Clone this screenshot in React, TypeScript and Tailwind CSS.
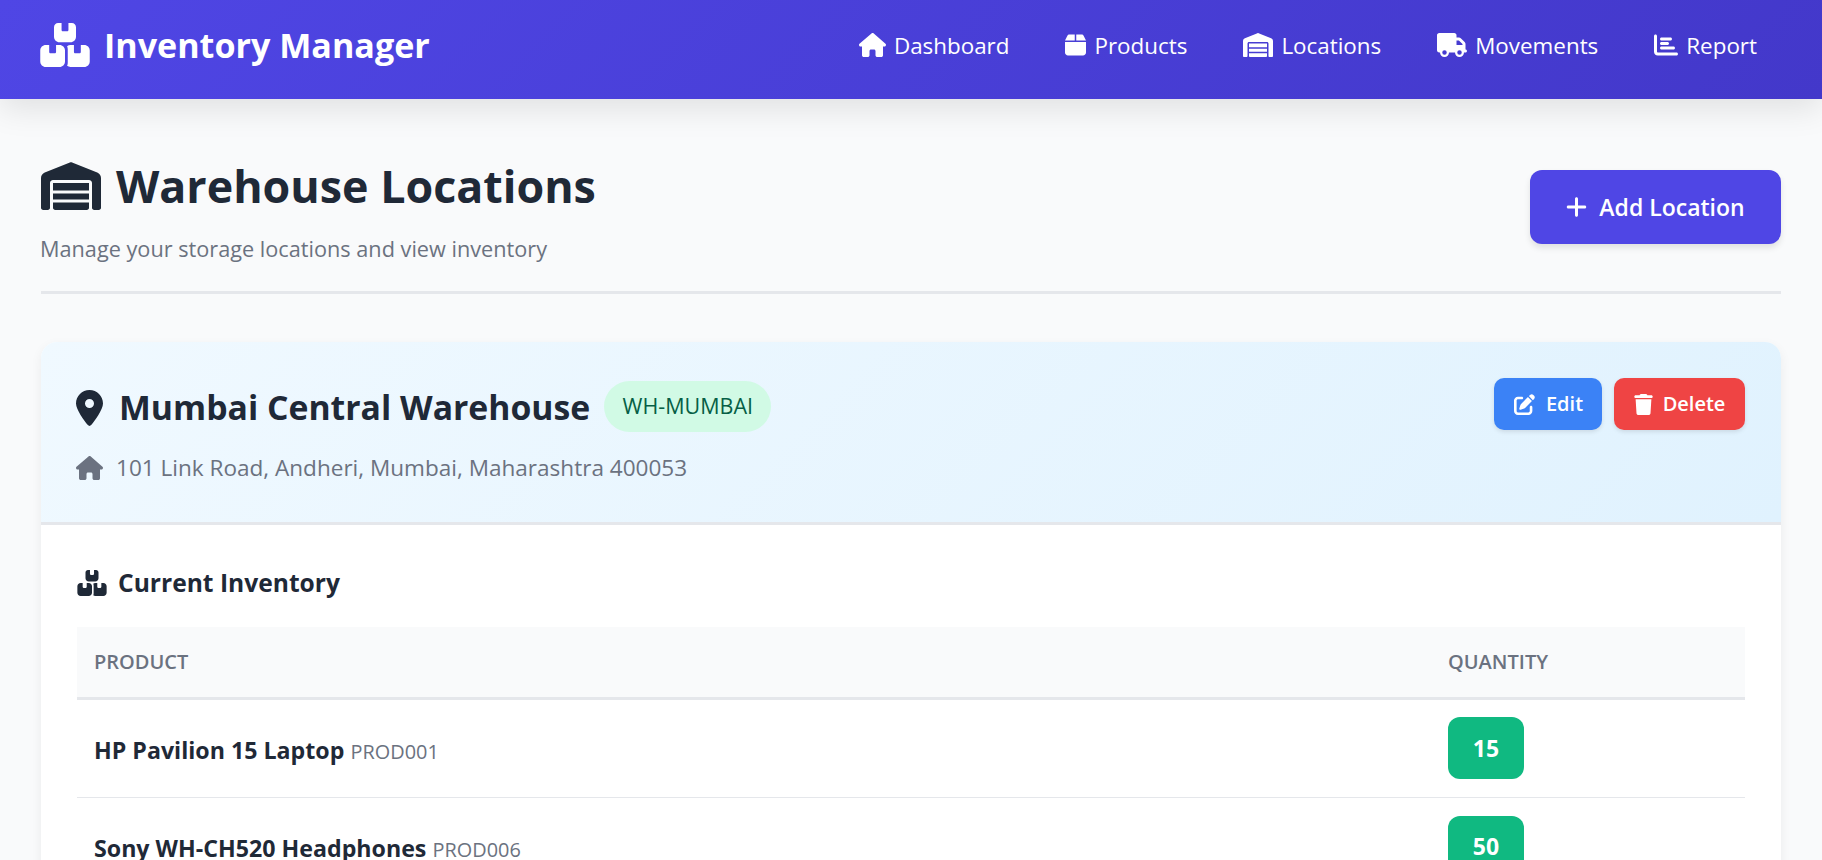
import { FaBox, FaBoxesStacked, FaChartBar, FaHouse, FaLocationDot, FaPenToSquare, FaPlus, FaTrash, FaTruck, FaWarehouse } from 'react-icons/fa6';

const navLinks = [
  { label: 'Dashboard', icon: FaHouse, iconClass: 'w-[27px] h-6' },
  { label: 'Products', icon: FaBox, iconClass: 'w-[21px] h-6' },
  { label: 'Locations', icon: FaWarehouse, iconClass: 'w-[30px] h-6' },
  { label: 'Movements', icon: FaTruck, iconClass: 'w-[30px] h-6' },
  { label: 'Report', icon: FaChartBar, iconClass: 'w-6 h-6' }
];

const inventory = [
  { name: 'HP Pavilion 15 Laptop', code: 'PROD001', quantity: 15 },
  { name: 'Sony WH-CH520 Headphones', code: 'PROD006', quantity: 50 }
];

export default function App() {
  return (
    <div className="h-screen overflow-hidden bg-[#f9fafb] font-['Open_Sans','Noto_Sans',sans-serif] text-[#1f2937]">
      <header className="relative z-10 flex h-[99px] items-center justify-between bg-[linear-gradient(135deg,#4f46e5,#4338ca)] pb-[9px] pl-10 pr-[65px] text-white shadow-[0_10px_30px_rgba(0,0,0,0.1)]">
        <div className="flex items-center gap-[14px]">
          <FaBoxesStacked className="h-11 w-[50px]" />
          <span className="text-[34.1px] font-bold leading-none">Inventory Manager</span>
        </div>
        <nav className="mt-[1px] flex items-center gap-[56px]">
          {navLinks.map((link) => {
            const Icon = link.icon;
            return (
              <a key={link.label} className="flex items-center gap-2 text-[22.4px] font-medium">
                <Icon className={link.iconClass} />
                <span>{link.label}</span>
              </a>
            );
          })}
        </nav>
      </header>

      <main className="px-[41px] pt-[56px]">
        <div className="flex items-start justify-between border-b-[3px] border-[#e5e7eb] pb-[26px]">
          <div>
            <h1 className="flex h-[62px] items-center gap-[15px] text-[44.8px] font-bold leading-none">
              <FaWarehouse className="h-12 w-[60px]" />
              Warehouse Locations
            </h1>
            <p className="-ml-px mt-4 text-[21.7px] leading-8 text-[#6b7280]">Manage your storage locations and view inventory</p>
          </div>
          <button className="mt-[15px] flex h-[74px] w-[251px] items-center justify-center gap-[12px] rounded-xl bg-[#4f46e5] text-[23px] font-semibold text-white shadow-[0_4px_6px_rgba(0,0,0,0.1)]">
            <FaPlus className="h-[24px] w-[21px]" />
            Add Location
          </button>
        </div>

        <section className="mt-[48px] overflow-hidden rounded-2xl bg-white shadow-[0_4px_12px_rgba(0,0,0,0.06)]">
          <div className="flex items-start justify-between border-b-[3px] border-[#e5e7eb] bg-[linear-gradient(135deg,#f0f9ff,#e0f2fe)] pb-[38px] pl-[35px] pr-9 pt-[36px]">
            <div className="mt-1">
              <div className="flex items-center gap-[14px]">
                <h2 className="mt-[2px] flex items-center gap-4 text-[33.75px] font-bold leading-none">
                  <FaLocationDot className="h-9 w-[27px]" />
                  Mumbai Central Warehouse
                </h2>
                <span className="-mt-px flex h-[51px] w-[167px] items-center justify-center rounded-full bg-[#d1fae5] text-[21.5px] font-medium text-[#065f46]">WH-MUMBAI</span>
              </div>
              <p className="mt-5 flex items-center gap-[13px] text-[22.55px] leading-8 text-[#6b7280]">
                <FaHouse className="h-6 w-[27px]" />
                101 Link Road, Andheri, Mumbai, Maharashtra 400053
              </p>
            </div>
            <div className="flex gap-3">
              <button className="flex h-[52px] w-[108px] items-center justify-center gap-[10px] rounded-[10px] bg-[#3b82f6] text-[20px] font-semibold text-white shadow-[0_2px_4px_rgba(0,0,0,0.1)]">
                <FaPenToSquare className="h-[21px] w-[23px]" />
                Edit
              </button>
              <button className="flex h-[52px] w-[131px] items-center justify-center gap-[10px] rounded-[10px] bg-[#ef4444] text-[20px] font-semibold text-white shadow-[0_2px_4px_rgba(0,0,0,0.1)]">
                <FaTrash className="h-[21px] w-[19px]" />
                Delete
              </button>
            </div>
          </div>

          <div className="px-9 pt-[45px]">
            <h3 className="flex items-center gap-[11px] text-[24.6px] font-bold leading-none">
              <FaBoxesStacked className="h-[26px] w-[30px]" />
              Current Inventory
            </h3>
            <table className="mt-[31px] w-full border-collapse text-left">
              <thead>
                <tr className="h-[71px] border-b-[3px] border-[#e5e7eb] bg-[#f9fafb] text-[20px] font-semibold uppercase text-[#6b7280]">
                  <th className="px-[17px] font-semibold">Product</th>
                  <th className="w-[297px] px-0 font-semibold">Quantity</th>
                </tr>
              </thead>
              <tbody>
                {inventory.map((item) => (
                  <tr key={item.code} className="h-[99px] border-b border-[#e5e7eb]">
                    <td className="px-[17px] pt-1">
                      <span className="text-[23.2px] font-bold">{item.name}</span>{' '}
                      <span className="ml-[2px] text-[19.9px] text-[#6b7280]">{item.code}</span>
                    </td>
                    <td>
                      <span className="flex h-[62px] w-[76px] items-center justify-center rounded-xl bg-[#10b981] text-[23px] font-bold text-white">{item.quantity}</span>
                    </td>
                  </tr>
                ))}
              </tbody>
            </table>
          </div>
        </section>
      </main>
    </div>
  );
}
